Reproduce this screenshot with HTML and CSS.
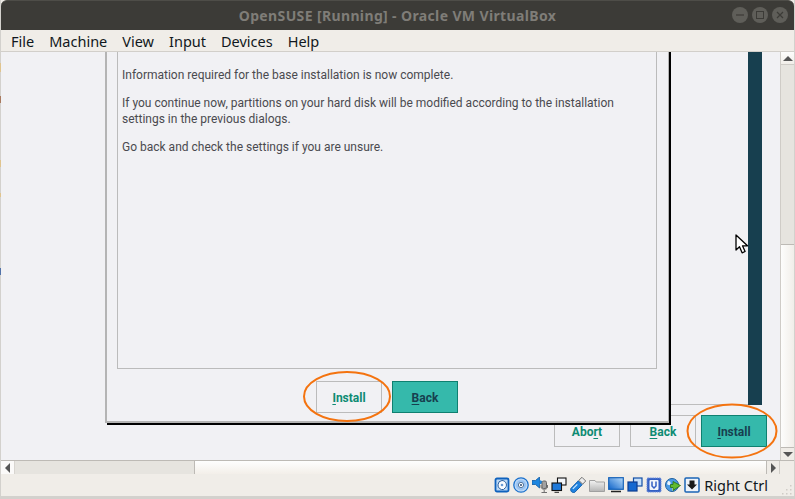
FILE: index.html
```html
<!DOCTYPE html>
<html lang="en">
<head>
<meta charset="utf-8">
<title>OpenSUSE [Running] - Oracle VM VirtualBox</title>
<link rel="stylesheet" href="styles.css">
</head>
<body>
<div class="window">
  <header class="titlebar">
    <div class="title">OpenSUSE [Running] - Oracle VM VirtualBox</div>
    <div class="controls">
      <span class="ctl"><svg viewBox="0 0 16 16" width="16" height="16"><path d="M4 8h8" stroke="#3c3b37" stroke-width="1.2"/></svg></span>
      <span class="ctl"><svg viewBox="0 0 16 16" width="16" height="16"><rect x="4.5" y="4.5" width="7" height="7" fill="none" stroke="#3c3b37"/></svg></span>
      <span class="ctl"><svg viewBox="0 0 16 16" width="16" height="16"><path d="M5 5l6 6M11 5l-6 6" stroke="#3c3b37" stroke-width="1.2"/></svg></span>
    </div>
  </header>
  <nav class="menubar">
    <span class="menu-item">File</span>
    <span class="menu-item">Machine</span>
    <span class="menu-item">View</span>
    <span class="menu-item">Input</span>
    <span class="menu-item">Devices</span>
    <span class="menu-item">Help</span>
  </nav>
  <div class="viewport">
    <main class="guest">
      <div class="installer">
        <div class="installer-top">
          <div class="installer-main"></div>
          <div class="installer-bar"></div>
        </div>
        <div class="installer-buttons">
          <button class="btn">Abo<u>r</u>t</button>
          <button class="btn"><u>B</u>ack</button>
          <button class="btn btn-primary btn-spaced"><u>I</u>nstall</button>
        </div>
      </div>
      <section class="dialog">
        <div class="dialog-frame">
          <p>Information required for the base installation is now complete.</p>
          <p>If you continue now, partitions on your hard disk will be modified according to the installation settings in the previous dialogs.</p>
          <p>Go back and check the settings if you are unsure.</p>
        </div>
        <div class="dialog-buttons">
          <button class="btn"><u>I</u>nstall</button>
          <button class="btn btn-primary"><u>B</u>ack</button>
        </div>
      </section>
      <svg class="ring ring-a" viewBox="0 0 88 51" width="88" height="51"><ellipse cx="44" cy="25.5" rx="43" ry="24.5" fill="none" stroke="#f4730f" stroke-width="2"/></svg>
      <svg class="ring ring-b" viewBox="0 0 92 56" width="92" height="56"><ellipse cx="46" cy="28" rx="44.5" ry="26.5" fill="none" stroke="#f4730f" stroke-width="2"/></svg>
      <svg class="pointer" viewBox="0 0 14 21" width="14" height="21"><path d="M1 1v15l3.5-3.2 2.6 6 3-1.3-2.6-5.7H12.500z" fill="#fff" stroke="#000" stroke-width="1.300" stroke-linejoin="round"/></svg>
    </main>
    <div class="vscroll">
      <div class="sb-btn sb-btn-v"><i class="arrow arrow-up"></i></div>
      <div class="vtrough"></div>
      <div class="vthumb"></div>
      <div class="sb-btn sb-btn-v sb-btn-end"><i class="arrow arrow-down"></i></div>
    </div>
  </div>
  <div class="hscroll">
    <div class="sb-btn sb-btn-h"><i class="arrow arrow-left"></i></div>
    <div class="htrough"></div>
    <div class="hthumb"></div>
    <div class="sb-btn sb-btn-h sb-btn-right"><i class="arrow arrow-right"></i></div>
    <div class="corner"></div>
  </div>
  <footer class="statusbar">
    <svg class="ico" viewBox="0 0 16 16"><rect x="1.500" y="1.500" width="13" height="13" rx="1.500" fill="#bcd9f6" stroke="#0f62bd" stroke-width="1.800"/><path d="M8 3.500a4.500 4.500 0 0 1 3.800 6.800L9.500 12.500a4.500 4.500 0 0 1-5.500-4.700A4.500 4.500 0 0 1 8 3.500z" fill="#fafcff" stroke="#2a5f9e"/><circle cx="8" cy="8" r="1.300" fill="#6a9bd2"/></svg>
    <svg class="ico" viewBox="0 0 16 16"><defs><radialGradient id="cd"><stop offset="0" stop-color="#fff"/><stop offset=".55" stop-color="#8fbdf0"/><stop offset="1" stop-color="#dcebfb"/></radialGradient></defs><circle cx="8" cy="8" r="7.200" fill="url(#cd)" stroke="#1a70cc" stroke-width="1.300"/><circle cx="8" cy="8" r="2.600" fill="#fff" stroke="#4f7199"/><circle cx="8" cy="8" r="1" fill="#2b4a70"/></svg>
    <svg class="ico" viewBox="0 0 16 16"><path d="M0 3.500h3.500L7.500 0v11l-4-3.500H0z" fill="#1d86e0" stroke="#0f5aa3" stroke-width=".8"/><path d="M7.500 3l2.500 1v2.500l-2.500 1z" fill="#1d86e0"/><rect x="10" y="4" width="4.500" height="7.500" rx="1.500" fill="#a2a2a2" stroke="#666"/><path d="M9 8v2c0 3 6.500 3 6.500 0V8M12.200 13v2M9.500 15.500h5.500" fill="none" stroke="#6f6f6f"/></svg>
    <svg class="ico" viewBox="0 0 16 16"><rect x="6.500" y="1" width="8.500" height="7" fill="#f4f7fb" stroke="#111" stroke-width="1.100"/><rect x="1" y="6" width="9.500" height="7.500" fill="#2079d8" stroke="#111" stroke-width="1.100"/><path d="M3.500 15.300h4.500" stroke="#222"/></svg>
    <svg class="ico" viewBox="0 0 16 16"><path d="M.8 11.500L8.300 3.800l3.900 3.900-7.300 7.500c-2.400 1.400-5-1.200-4.100-3.700z" fill="#1f82e0" stroke="#0f5aa8" stroke-width=".9"/><path d="M8.800 3.300L12 .3l3.700 3.700-3 3.200z" fill="#ececec" stroke="#666" stroke-width=".9"/><path d="M2.800 11.800l4.500-4.500" stroke="#cfe8fd" stroke-width="1.200"/></svg>
    <svg class="ico" viewBox="0 0 16 16"><defs><linearGradient id="fo" x1="0" y1="0" x2="0" y2="1"><stop offset="0" stop-color="#f3f3f3"/><stop offset="1" stop-color="#b4b4b4"/></linearGradient></defs><path d="M.500 3.500h5.500l1.200 1.500h8.300v9.500H.500z" fill="url(#fo)" stroke="#a0a0a0"/></svg>
    <svg class="ico" viewBox="0 0 16 16"><defs><linearGradient id="di" x1="0" y1="1" x2="1" y2="0"><stop offset="0" stop-color="#0f63c8"/><stop offset="1" stop-color="#b8dcfb"/></linearGradient></defs><rect x=".7" y=".7" width="14.600" height="11.600" fill="url(#di)" stroke="#1562b8" stroke-width="1.200"/><path d="M3 14.500h10" stroke="#222" stroke-width="1.500"/></svg>
    <svg class="ico" viewBox="0 0 16 16"><rect x="6.500" y="1" width="8.500" height="8" fill="#c7e0fa" stroke="#134fa5" stroke-width="1.200"/><rect x="1" y="5" width="9" height="9" fill="#1468d0" stroke="#0d3c90" stroke-width="1.200"/></svg>
    <svg class="ico" viewBox="0 0 16 16"><rect x="1" y="1" width="14" height="14" rx="1" fill="#3560c4" stroke="#6f8fdc" stroke-dasharray="1.500 .7"/><rect x="3.500" y="3" width="9" height="10" rx="1" fill="#f2f5fb"/><path d="M6 4.500v4.500l2 2 2-2V4.500" fill="none" stroke="#3560c4" stroke-width="1.500"/></svg>
    <svg class="ico" viewBox="0 0 16 16"><circle cx="7" cy="8" r="6.500" fill="#4a9ae4" stroke="#1f5f9f"/><path d="M3 4c2 0 3 1 2.500 3S3 8 2 7zM7 11c2-1 1 3 0 3z" fill="#eaf3fb"/><path d="M8 4.500l7.500 4-7.500 5v-3H5.500v-3H8z" fill="#62bb30" stroke="#26700f" stroke-width=".8"/></svg>
    <svg class="ico" viewBox="0 0 16 16"><rect x="1" y="1" width="14" height="14" rx="1" fill="#eef3f9" stroke="#1a64b5" stroke-width="1.500"/><path d="M5.500 3.500h5v4h2.500L8 12.500 3 7.500h2.500z" fill="#1a1a1a"/></svg>
    <span class="hostkey">Right Ctrl</span>
    <svg class="grip" viewBox="0 0 12 12" width="12" height="12"><path d="M9 1h1.500v1.500H9zM5 5h1.500v1.500H5zM9 5h1.500v1.500H9zM1 9h1.500v1.500H1zM5 9h1.500v1.500H5zM9 9h1.500v1.500H9z" fill="#cfccc6"/></svg>
  </footer>
</div>
</body>
</html>
```
FILE: styles.css
```css
* { box-sizing: border-box; }
html, body { margin: 0; height: 100%; }
body {
  width: 795px;
  height: 499px;
  overflow: hidden;
  padding: 0 1px 3px 1px;
  background:
    linear-gradient(to bottom,
      #d3d1cd 0 63px, #e0c48e 63px 72px, #d3d1cd 72px 96px, #a97a5f 96px 103px,
      #d3d1cd 103px 160px, #e0c48e 160px 167px, #d3d1cd 167px 193px, #e0c48e 193px 197px,
      #d3d1cd 197px 268px, #5272a8 268px 275px, #d3d1cd 275px) no-repeat left top / 1px 100%,
    #d3d1cd;
}
.window {
  height: 496px;
  display: flex;
  flex-direction: column;
  background: #f0ede8;
}

/* Title bar */
.titlebar {
  flex: 0 0 30px;
  background: #3c3b37;
  border-top: 1px solid #4e4d48;
  border-radius: 6px 6px 0 0;
  display: grid;
  grid-template-columns: 1fr;
  align-items: center;
  position: relative;
  padding-bottom: 1px;
}
.title {
  text-align: center;
  font: 700 14px "Noto Sans", sans-serif;
  letter-spacing: .37px;
  color: #7f7d78;
  white-space: nowrap;
}
.controls {
  position: absolute;
  right: 6px;
  top: 6px;
  display: flex;
  gap: 4px;
}
.ctl {
  width: 16px;
  height: 16px;
  border-radius: 50%;
  background: #5f5e59;
  display: block;
}
.ctl svg { display: block; }

/* Menu bar */
.menubar {
  flex: 0 0 22px;
  display: flex;
  gap: 15px;
  padding: 0 0 0 10px;
  align-items: center;
  background: #f0ede8;
  border-bottom: 1px solid #d2cfca;
  font: 14.5px "Noto Sans", sans-serif;
  color: #101820;
}

/* Viewport */
.viewport {
  flex: 0 0 408px;
  display: flex;
}
.guest {
  flex: 1;
  position: relative;
  overflow: hidden;
  background: #f1f1f4;
}
.installer {
  height: 100%;
  display: flex;
  flex-direction: column;
}
.installer-top {
  flex: 0 0 353px;
  display: flex;
  padding: 0 18px 0 200px;
}
.installer-main {
  flex: 1;
  border-bottom: 1px solid #bdbdbd;
}
.installer-bar {
  flex: 0 0 14px;
  background: #173f4f;
}
.installer-buttons {
  display: flex;
  justify-content: flex-end;
  gap: 10px;
  padding: 10px 13px 0 0;
}
.btn {
  width: 66px;
  height: 32px;
  padding: 2px 0 0;
  background: transparent;
  border: 1px solid #bbb;
  font: 700 12px Roboto, sans-serif;
  color: #0d8b73;
  line-height: 16px;
}
.btn u { text-underline-offset: 2px; }
.btn-primary {
  background: #35b9ab;
  border-color: #0f8070;
  color: #173f4f;
}
.btn-spaced { margin-left: -5px; }

/* Dialog window over the installer */
.dialog {
  position: absolute;
  left: 104px;
  top: -20px;
  width: 564px;
  height: 391px;
  display: flex;
  flex-direction: column;
  background: #f1f1f4;
  border-left: 2px solid #b4b4b4;
  border-bottom: 2px solid #b4b4b4;
  border-right: 1px solid #b4b4b4;
  box-shadow: 2px 2px 0 #000;
  padding: 10px 11px 8px 10px;
}
.dialog-frame {
  flex: 1;
  border: 1px solid #bbb;
  padding: 24px 4px 0;
  font: 12px/16px Roboto, sans-serif;
  color: #4a4a4f;
}
.dialog-frame p { margin: 0 0 12px; }
.dialog-buttons {
  display: flex;
  justify-content: center;
  gap: 10px;
  margin-top: 12px;
}

/* Annotations and mouse pointer */
.ring, .pointer { position: absolute; display: block; }
.ring-a { left: 302px; top: 319px; }
.ring-b { left: 685px; top: 351px; }
.pointer { left: 734px; top: 182px; }

/* Scrollbars */
.vscroll {
  flex: 0 0 14px;
  display: flex;
  flex-direction: column;
  background: #e6e4df;
  border-left: 1px solid #cfccc7;
}
.sb-btn {
  display: flex;
  align-items: center;
  justify-content: center;
  background: linear-gradient(#fdfdfc, #f1eee9);
}
.sb-btn-v { flex: 0 0 13px; border-bottom: 1px solid #cfccc7; }
.sb-btn-end { border-bottom: 0; border-top: 1px solid #bdbab5; background: #efece7; }
.vtrough { flex: 0 0 180px; background: #e6e4df; border-bottom: 1px solid #bdbab5; }
.vthumb { flex: 1; background: linear-gradient(to right, #fdfdfc, #f1eee9); }
.arrow { display: block; width: 0; height: 0; border: 0 solid transparent; }
.arrow-up { border-width: 0 5px 5px; border-bottom-color: #555; }
.arrow-down { border-width: 5px 5px 0; border-top-color: #555; }
.arrow-left { border-width: 5px 5px 5px 0; border-right-color: #555; }
.arrow-right { border-width: 5px 0 5px 5px; border-left-color: #555; }

.hscroll {
  flex: 0 0 14px;
  display: flex;
  background: #e6e4df;
  border-top: 1px solid #bdbab5;
}
.sb-btn-h { flex: 0 0 14px; background: #fbfaf9; border-right: 1px solid #d8d5d0; }
.sb-btn-right { background: #efece7; border-right: 1px solid #cfccc7; flex-basis: 13px; }
.htrough { flex: 0 0 180px; border-right: 1px solid #bdbab5; }
.hthumb { flex: 1; background: linear-gradient(#fefefe, #f3efe9); border-right: 1px solid #bdbab5; }
.corner { flex: 0 0 14px; background: #f0ede8; }

/* Status bar */
.statusbar {
  flex: 1;
  display: flex;
  align-items: center;
  justify-content: flex-end;
  gap: 3px;
  padding: 0 1px 0 0;
  background: #f0ede8;
}
.ico { width: 16px; height: 16px; flex: none; display: block; }
.hostkey {
  margin: 0 13px 0 1px;
  font: 14.5px "Noto Sans", sans-serif;
  color: #101820;
}
.grip { align-self: flex-end; flex: none; margin-left: -3px; display: block; }
```
